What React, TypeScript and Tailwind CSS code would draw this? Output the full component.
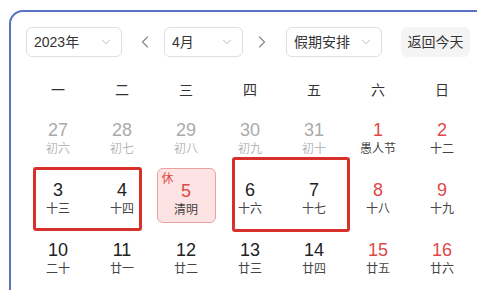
import { ChevronDown, ChevronLeft, ChevronRight } from 'lucide-react';

type Day = {
  n: number;
  lunar: string;
  muted?: boolean;
  red?: boolean;
  holiday?: boolean;
};

const weekdays = ['一', '二', '三', '四', '五', '六', '日'];

const rows: Day[][] = [
  [
    { n: 27, lunar: '初六', muted: true },
    { n: 28, lunar: '初七', muted: true },
    { n: 29, lunar: '初八', muted: true },
    { n: 30, lunar: '初九', muted: true },
    { n: 31, lunar: '初十', muted: true },
    { n: 1, lunar: '愚人节', red: true },
    { n: 2, lunar: '十二', red: true },
  ],
  [
    { n: 3, lunar: '十三' },
    { n: 4, lunar: '十四' },
    { n: 5, lunar: '清明', red: true, holiday: true },
    { n: 6, lunar: '十六' },
    { n: 7, lunar: '十七' },
    { n: 8, lunar: '十八', red: true },
    { n: 9, lunar: '十九', red: true },
  ],
  [
    { n: 10, lunar: '二十' },
    { n: 11, lunar: '廿一' },
    { n: 12, lunar: '廿二' },
    { n: 13, lunar: '廿三' },
    { n: 14, lunar: '廿四' },
    { n: 15, lunar: '廿五', red: true },
    { n: 16, lunar: '廿六', red: true },
  ],
];

const Select = ({ label, className }: { label: string; className: string }) => (
  <div
    className={`h-[30px] flex items-center justify-between rounded-[6px] border border-[#dcdfe6] bg-white pl-[7px] pr-[8px] text-[14px] text-[#333] ${className}`}
  >
    <span>{label}</span>
    <ChevronDown size={14} strokeWidth={1.5} className="text-[#b4b4b4]" />
  </div>
);

const DayCell = ({ d }: { d: Day }) => {
  const numColor = d.muted ? 'text-[#aaaaaa]' : d.red ? 'text-[#e04848]' : 'text-[#222]';
  const lunarColor = d.muted ? 'text-[#b8b8b8]' : 'text-[#444]';
  return (
    <div className="h-[60px] flex justify-center">
      <div
        className={`relative w-[59px] h-[55px] flex flex-col items-center pt-[12px] rounded-[6px] ${
          d.holiday ? 'bg-[#fde3e3] border border-[#e9a2a2] pt-[11px]' : ''
        }`}
      >
        {d.holiday && (
          <span className="absolute top-[3px] left-[4px] text-[12px] leading-[14px] text-[#e04848]">休</span>
        )}
        <span className={`text-[18px] leading-[20px] ${numColor}`}>{d.n}</span>
        <span className={`mt-[1px] text-[12px] leading-[16px] ${lunarColor}`}>{d.lunar}</span>
      </div>
    </div>
  );
};

export default function App() {
  return (
    <div
      className="relative w-[477px] h-[290px] overflow-hidden bg-white"
      style={{ fontFamily: '"Liberation Sans", "Noto Sans CJK SC", sans-serif' }}
    >
      <div className="ml-[9px] mt-[10px] w-[500px] h-[320px] rounded-tl-[14px] border-2 border-[#5a72c2] px-[15px] pt-[15px]">
        <div className="flex items-center">
          <Select label="2023年" className="w-[96px]" />
          <ChevronLeft size={20} strokeWidth={1.4} className="ml-[13px] text-[#888]" />
          <Select label="4月" className="ml-[9px] w-[79px]" />
          <ChevronRight size={20} strokeWidth={1.4} className="ml-[9px] text-[#888]" />
          <Select label="假期安排" className="ml-[14px] w-[96px]" />
          <button className="ml-[19px] h-[30px] w-[69px] rounded-[6px] bg-[#f4f4f5] text-[14px] text-[#333]">
            返回今天
          </button>
        </div>

        <div className="mt-[16px] w-[448px] grid grid-cols-7 h-[35px] items-center text-[14px] text-[#333]">
          {weekdays.map((w) => (
            <div key={w} className="text-center">
              {w}
            </div>
          ))}
        </div>

        <div className="w-[448px] grid grid-cols-7">
          {rows.flat().map((d, i) => (
            <DayCell key={i} d={d} />
          ))}
        </div>
      </div>

      {/* annotation boxes */}
      <div className="absolute left-[33px] top-[167px] w-[109px] h-[64px] rounded-[3px] border-[3px] border-[#d8312b]" />
      <div className="absolute left-[232px] top-[157px] w-[118px] h-[75px] rounded-[3px] border-[3px] border-[#d8312b]" />
    </div>
  );
}
